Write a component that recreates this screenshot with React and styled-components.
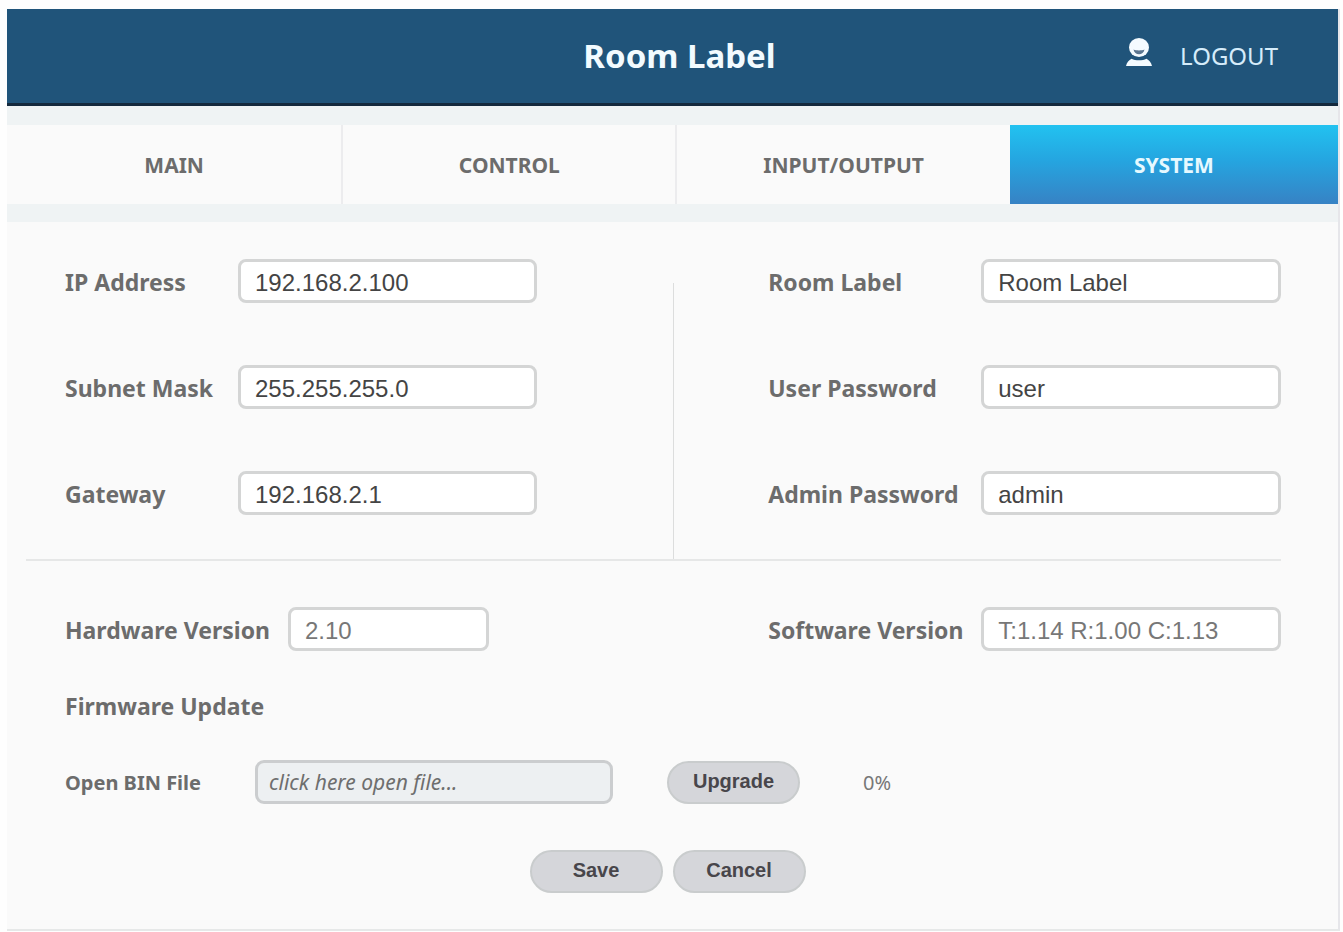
import { useState } from "react";
import styled, { createGlobalStyle } from "styled-components";

const GlobalStyle = createGlobalStyle`
  * {
    box-sizing: border-box;
  }

  body {
    margin: 0;
    background-color: #fefefe;
    font-family: "Noto Sans", "Open Sans", sans-serif;
    color: #6c6c6c;
  }

  button, input {
    font-family: inherit;
  }
`;

const Frame = styled.div`
  margin: 9px 3px 0 7px;
  border-right: 2px solid #e6e6ea;
  border-bottom: 2px solid #e6e8e8;
  background-color: #fafafa;
`;

const Header = styled.header`
  display: grid;
  grid-template-columns: 1fr auto 1fr;
  align-items: center;
  height: 97px;
  padding: 0 60px 0 74px;
  background-color: #20547a;
  border-bottom: 3px solid #14293d;
`;

const Title = styled.h1`
  grid-column: 2;
  margin: 0;
  font-size: 33px;
  line-height: 40px;
  color: #f2fbff;
`;

const Logout = styled.button`
  justify-self: end;
  display: flex;
  align-items: center;
  gap: 28px;
  padding: 0;
  border: none;
  background: none;
  font-size: 24px;
  line-height: 28px;
  color: #d5ecfa;
  cursor: pointer;
`;

const UserIcon = styled.svg`
  width: 26px;
  height: 28px;
  margin-bottom: 8px;
`;

const Tabs = styled.nav`
  display: grid;
  grid-template-columns: repeat(3, 335fr) 329fr;
  padding: 19px 0 18px;
  background-color: #eff3f4;
`;

const Tab = styled.button`
  height: 79px;
  padding: 0;
  border: none;
  border-left: ${({ $first }) => ($first ? "none" : "2px solid #ececee")};
  background: #fafafa;
  font-size: 21px;
  font-weight: bold;
  color: #6c6c6c;
  cursor: pointer;

  ${({ $active }) => $active && `
    border-left: none;
    background: linear-gradient(#22c2f0, #25a5e0 45%, #3782c4);
    color: #e6f9ff;
  `}
`;

const Panel = styled.form`
  padding: 37px 57px 36px 19px;
`;

const Settings = styled.div`
  display: grid;
  grid-template-columns: minmax(0, 16fr) 1px minmax(0, 15fr);
  border-bottom: 2px solid #e6e7e7;
`;

const Divider = styled.div`
  margin-top: 24px;
  background-color: #dcdddd;
`;

const Group = styled.div`
  display: flex;
  flex-direction: column;
  gap: 62px;
  padding: 0 0 44px ${({ $right }) => ($right ? "94px" : "39px")};
`;

const Row = styled.div`
  display: flex;
  align-items: center;
`;

const Label = styled.label`
  flex: none;
  width: ${({ $width }) => $width}px;
  padding-top: 2px;
  font-size: ${({ $small }) => ($small ? "20px" : "23px")};
  font-weight: bold;
  line-height: 28px;
  white-space: nowrap;
`;

const Input = styled.input`
  flex: ${({ $width }) => ($width ? `0 1 ${$width}px` : "1")};
  min-width: 0;
  height: 44px;
  padding: 3px 14px 0;
  border: 3px solid #d4d5d5;
  border-radius: 8px;
  background-color: #fff;
  font-family: "Liberation Sans", Arial, sans-serif;
  font-size: 24px;
  color: ${({ readOnly }) => (readOnly ? "#777" : "#444")};
  outline: none;
`;

const FileInput = styled.input`
  flex: 0 1 358px;
  min-width: 0;
  height: 44px;
  padding: 0 11px;
  border: 3px solid #cbcdcf;
  border-radius: 9px;
  background-color: #edf0f2;
  font-size: 21px;
  cursor: pointer;
  outline: none;

  &::placeholder {
    font-style: italic;
    color: #6e6e6e;
    opacity: 1;
  }
`;

const Versions = styled.div`
  display: grid;
  grid-template-columns: minmax(0, 16fr) 1px minmax(0, 15fr);
  padding-top: 46px;
`;

const VersionCell = styled(Row)`
  grid-column: ${({ $right }) => ($right ? 3 : 1)};
  padding-left: ${({ $right }) => ($right ? "94px" : "39px")};
`;

const SubTitle = styled.h2`
  margin: 39px 0 0 39px;
  font-size: 23px;
  line-height: 32px;
`;

const Firmware = styled(Row)`
  margin-top: 38px;
  padding-left: 39px;
`;

const Button = styled.button`
  width: 133px;
  height: 43px;
  padding: 0 0 2px;
  border: 2px solid #c9cccd;
  border-radius: 22px;
  background-color: #d5d6da;
  font-family: "Liberation Sans", Arial, sans-serif;
  font-size: 20px;
  font-weight: bold;
  color: #48464b;
  cursor: pointer;
`;

const UpgradeButton = styled(Button)`
  margin-left: 54px;
`;

const Progress = styled.output`
  margin-left: 63px;
  font-size: 20px;
  color: #777;
`;

const Actions = styled.div`
  display: flex;
  justify-content: center;
  gap: 10px;
  margin-top: 46px;
  padding-left: 28px;
`;

const tabs = ["MAIN", "CONTROL", "INPUT/OUTPUT", "SYSTEM"];

const networkFields = [
  { name: "ip", label: "IP Address" },
  { name: "mask", label: "Subnet Mask" },
  { name: "gateway", label: "Gateway" },
];

const accessFields = [
  { name: "room", label: "Room Label" },
  { name: "user", label: "User Password" },
  { name: "admin", label: "Admin Password" },
];

const defaults = {
  ip: "192.168.2.100",
  mask: "255.255.255.0",
  gateway: "192.168.2.1",
  room: "Room Label",
  user: "user",
  admin: "admin",
};

const App = () => {
  const [activeTab, setActiveTab] = useState("SYSTEM");
  const [values, setValues] = useState(defaults);

  const handleChange = (e) => {
    setValues({ ...values, [e.target.name]: e.target.value });
  };

  const renderField = ({ name, label }, labelWidth, inputWidth) => (
    <Row key={name}>
      <Label htmlFor={name} $width={labelWidth}>{label}</Label>
      <Input id={name} name={name} $width={inputWidth} value={values[name]} onChange={handleChange} />
    </Row>
  );

  return (
    <>
      <GlobalStyle />
      <Frame>
        <Header>
          <Title>Room Label</Title>
          <Logout type="button">
            <UserIcon viewBox="0 0 26 28" aria-hidden="true">
              <ellipse cx="13" cy="9.500" rx="10" ry="9.500" fill="#f4fbff" />
              <path d="M7.500 11.500c3 1.200 8 1.200 11 0-.5 3.200-2.800 4.700-5.500 4.700s-5-1.500-5.500-4.700z" fill="#5b7690" />
              <path d="M0 28c.8-3.500 3-6 5.500-7.300 4 2 11 2 15 0 2.500 1.300 4.700 3.800 5.500 7.300z" fill="#f4fbff" />
            </UserIcon>
            LOGOUT
          </Logout>
        </Header>
        <Tabs>
          {tabs.map((tab, i) => (
            <Tab key={tab} type="button" $first={i === 0} $active={activeTab === tab} onClick={() => setActiveTab(tab)}>
              {tab}
            </Tab>
          ))}
        </Tabs>
        <Panel onSubmit={(e) => e.preventDefault()}>
          <Settings>
            <Group>{networkFields.map((field) => renderField(field, 173, 299))}</Group>
            <Divider />
            <Group $right>{accessFields.map((field) => renderField(field, 213))}</Group>
          </Settings>
          <Versions>
            <VersionCell>
              <Label htmlFor="hardware" $width={223}>Hardware Version</Label>
              <Input id="hardware" $width={201} value="2.10" readOnly />
            </VersionCell>
            <VersionCell $right>
              <Label htmlFor="software" $width={213}>Software Version</Label>
              <Input id="software" value="T:1.14 R:1.00 C:1.13" readOnly />
            </VersionCell>
          </Versions>
          <SubTitle>Firmware Update</SubTitle>
          <Firmware>
            <Label htmlFor="bin" $width={190} $small>Open BIN File</Label>
            <FileInput id="bin" placeholder="click here open file..." readOnly />
            <UpgradeButton type="button">Upgrade</UpgradeButton>
            <Progress htmlFor="bin">0%</Progress>
          </Firmware>
          <Actions>
            <Button type="submit">Save</Button>
            <Button type="button" onClick={() => setValues(defaults)}>Cancel</Button>
          </Actions>
        </Panel>
      </Frame>
    </>
  );
};

export default App;
